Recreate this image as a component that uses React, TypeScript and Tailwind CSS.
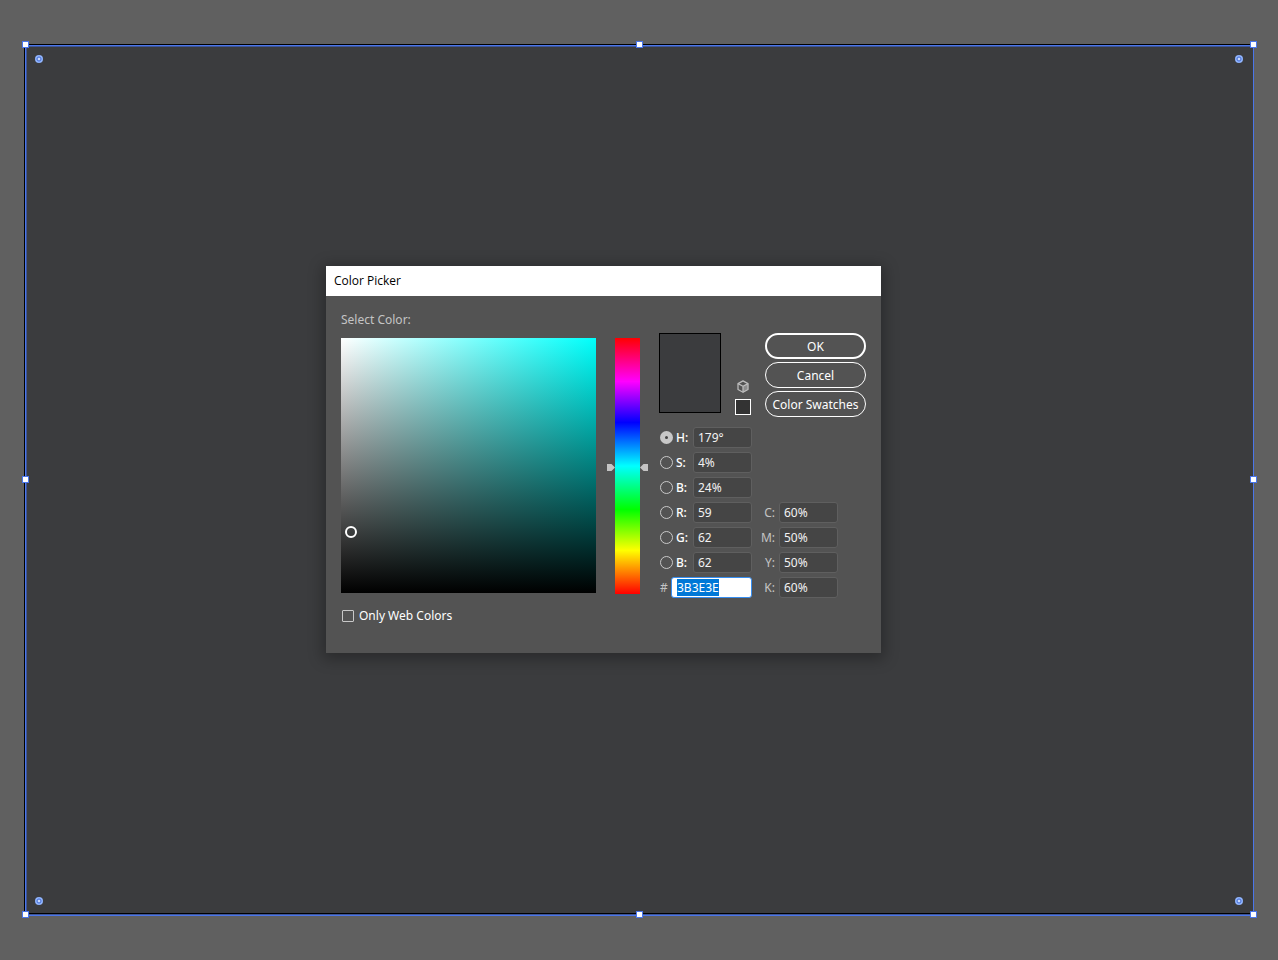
import { useEffect, useRef, useState } from "react";

const HANDLES = [
  "-left-[4px] -top-[5px]",
  "left-[calc(50%-4px)] -top-[5px]",
  "-right-[4px] -top-[5px]",
  "-left-[4px] top-[calc(50%-5px)]",
  "-right-[4px] top-[calc(50%-5px)]",
  "-left-[4px] -bottom-[3px]",
  "left-[calc(50%-4px)] -bottom-[3px]",
  "-right-[4px] -bottom-[3px]",
];

const CORNERS = [
  "left-[9px] top-[9px]",
  "right-[10px] top-[9px]",
  "left-[9px] bottom-[10px]",
  "right-[10px] bottom-[10px]",
];

const CHANNELS = [
  { id: "hue", label: "H:", value: "179°" },
  { id: "saturation", label: "S:", value: "4%" },
  { id: "brightness", label: "B:", value: "24%" },
  { id: "red", label: "R:", value: "59" },
  { id: "green", label: "G:", value: "62" },
  { id: "blue", label: "B:", value: "62" },
];

const INKS = [
  { id: "cyan", label: "C:", value: "60%" },
  { id: "magenta", label: "M:", value: "50%" },
  { id: "yellow", label: "Y:", value: "50%" },
  { id: "black", label: "K:", value: "60%" },
];

function ValueInput({ id, value, label }: { id: string; value: string; label?: string }) {
  return (
    <input
      id={id}
      type="text"
      aria-label={label}
      defaultValue={value}
      className="h-[21px] w-[59px] shrink-0 rounded-[3px] border border-[#5f5f5f] bg-[#454545] px-1 text-xs text-[#f2f2f2] outline-none"
    />
  );
}

function DialogButton({ children, primary = false }: { children: string; primary?: boolean }) {
  return (
    <button
      type="button"
      className={`h-[26px] w-full whitespace-nowrap rounded-full pt-0.5 text-xs leading-none text-white ${
        primary ? "border-2 border-white" : "border border-white"
      }`}
    >
      {children}
    </button>
  );
}

function HuePointer({ flipped = false }: { flipped?: boolean }) {
  return (
    <svg
      viewBox="0 0 8 8"
      aria-hidden="true"
      className={`absolute top-[125px] size-2 ${flipped ? "left-full -scale-x-100" : "right-full"}`}
    >
      <path d="M0 1H4.5L8 4.5L4.5 8H0Z" fill="#c4c4c4" />
    </svg>
  );
}

function CubeIcon() {
  return (
    <svg viewBox="0 0 12 13" className="h-[13px] w-3" fill="none" stroke="#bdbdbd" strokeWidth="1.25" strokeLinejoin="round" aria-hidden="true">
      <path d="M6 6.5L11.2 3.7V9.6L6 12.4Z" fill="#8c8c8c" stroke="none" />
      <path d="M6 0.9L11 3.6V9.5L6 12.2L1 9.5V3.6Z" />
      <path d="M1 3.6L6 6.3L11 3.6M6 6.3V12.2" />
    </svg>
  );
}

function ColorPicker() {
  const [channel, setChannel] = useState("hue");
  const hexRef = useRef<HTMLInputElement>(null);

  useEffect(() => {
    hexRef.current?.focus({ preventScroll: true });
    hexRef.current?.select();
  }, []);

  return (
    <section
      role="dialog"
      aria-labelledby="picker-title"
      className="absolute left-[300px] top-[220px] bg-[#535353] shadow-[0_3px_14px_3px_rgba(0,0,0,0.3)]"
    >
      <header className="flex h-[30px] items-center bg-white px-2">
        <h1 id="picker-title" className="font-['Open_Sans',sans-serif] text-xs text-black">
          Color Picker
        </h1>
      </header>

      <form className="flex gap-[19px] px-[15px] pb-[27px]" onSubmit={(e) => e.preventDefault()}>
        <div className="w-[255px] pt-[14px]">
          <h2 className="h-[19px] text-xs leading-[19px] text-[#c4c4c4]">Select Color:</h2>
          <div className="relative mt-[9px] h-[255px] bg-[linear-gradient(to_top,#000,transparent),linear-gradient(to_right,#fff,#00fffb)]">
            <span className="absolute left-1 top-[188px] size-3 rounded-full border-2 border-white" />
          </div>
          <label className="mt-[13px] flex h-5 items-center gap-[5px] pl-px text-xs text-white">
            <input
              type="checkbox"
              className="size-3 appearance-none rounded-[1px] border border-[#c8c8c8] checked:bg-[#c8c8c8]"
            />
            Only Web Colors
          </label>
        </div>

        <div className="pt-[42px]">
          <div className="relative h-64 w-[25px] bg-[linear-gradient(to_bottom,#f00,#f0f_17%,#00f_33%,#0ff_50%,#0f0_67%,#ff0_83%,#f00)]">
            <HuePointer />
            <HuePointer flipped />
            <input
              type="range"
              aria-label="Hue"
              min={0}
              max={360}
              defaultValue={179}
              className="absolute inset-0 size-full opacity-0 [direction:rtl] [writing-mode:vertical-lr]"
            />
          </div>
        </div>

        <div className="w-[207px] pt-[37px]">
          <div className="flex h-[84px]">
            <div className="h-20 w-[62px] border border-black bg-[#3b3c3e]" />
            <div className="ml-[14px] mr-[14px] flex w-4 flex-col items-center justify-end gap-[6px] pb-[2px]">
              <CubeIcon />
              <div className="size-4 border border-white bg-[#333]" />
            </div>
            <div className="flex flex-1 flex-col gap-[3px]">
              <DialogButton primary>OK</DialogButton>
              <DialogButton>Cancel</DialogButton>
              <DialogButton>Color Swatches</DialogButton>
            </div>
          </div>

          <div className="mt-[10px] flex items-end gap-[10px]">
            <div className="flex w-[93px] flex-col gap-1">
              {CHANNELS.map((c) => (
                <div key={c.id} className="flex items-center pl-px">
                  <input
                    id={`${c.id}-channel`}
                    type="radio"
                    name="channel"
                    checked={channel === c.id}
                    onChange={() => setChannel(c.id)}
                    className="size-[13px] shrink-0 appearance-none rounded-full border border-[#c8c8c8] checked:border-[5px] checked:bg-[#444]"
                  />
                  <label htmlFor={`${c.id}-channel`} className="ml-[3px] flex-1 text-xs font-medium text-white">
                    {c.label}
                  </label>
                  <ValueInput id={c.id} value={c.value} label={c.id} />
                </div>
              ))}
              <div className="flex items-center justify-between pl-px">
                <label htmlFor="hex" className="text-xs text-[#c4c4c4]">
                  #
                </label>
                <input
                  id="hex"
                  ref={hexRef}
                  type="text"
                  defaultValue="3B3E3E"
                  className="h-[21px] w-[81px] rounded-[3px] border border-[#378ef0] bg-white px-[5px] text-xs text-black outline-none selection:bg-[#0078d7] selection:text-white"
                />
              </div>
            </div>

            <div className="flex w-[76px] flex-col gap-1">
              {INKS.map((ink) => (
                <div key={ink.id} className="flex items-center justify-end gap-1">
                  <label htmlFor={ink.id} className="text-xs text-[#c4c4c4]">
                    {ink.label}
                  </label>
                  <ValueInput id={ink.id} value={ink.value} />
                </div>
              ))}
            </div>
          </div>
        </div>
      </form>
    </section>
  );
}

export default function App() {
  return (
    <main className="flex min-h-screen bg-[#606060] pb-11 pl-6 pr-6 pt-11 font-['Noto_Sans',sans-serif]">
      <div className="flex flex-1 border-l border-t border-black">
        <div className="relative flex-1 border border-[#4a76ea] bg-[#3b3c3e] shadow-[inset_1px_1px_0_#3f5596]">
          <div className="absolute inset-x-0 bottom-[1px] h-px bg-black" />
          <div className="absolute inset-x-0 bottom-0 h-px bg-[#3f5596]" />
          {CORNERS.map((place) => (
            <svg key={place} viewBox="0 0 8 8" className={`absolute size-2 ${place}`} aria-hidden="true">
              <circle cx="4" cy="4" r="4" fill="#8fb3fb" />
              <circle cx="4" cy="4" r="2" fill="#c9dafd" stroke="#3f6ad6" />
            </svg>
          ))}
          {HANDLES.map((place) => (
            <span key={place} className={`absolute size-[7px] border border-[#4a76ea] bg-white ${place}`} />
          ))}
          <ColorPicker />
        </div>
      </div>
    </main>
  );
}
